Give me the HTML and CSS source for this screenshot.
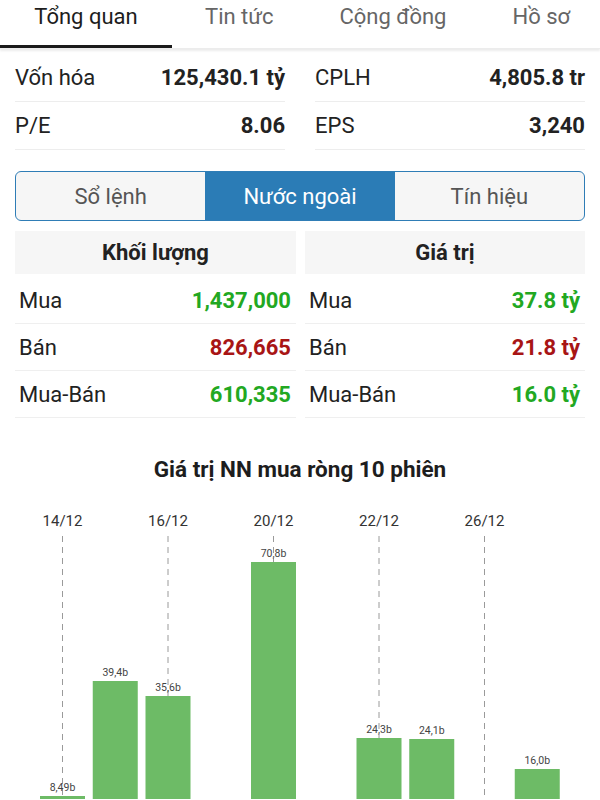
FILE: index.html
```html
<!DOCTYPE html>
<html lang="vi">
<head>
<meta charset="utf-8">
<link rel="stylesheet" href="styles.css">
</head>
<body>
<nav class="tabs">
  <div class="tab active">Tổng quan</div>
  <div class="tab">Tin tức</div>
  <div class="tab">Cộng đồng</div>
  <div class="tab">Hồ sơ</div>
</nav>
<main class="content">
  <section class="stats">
    <div class="stat"><span class="label">Vốn hóa</span><span class="value">125,430.1 tỷ</span></div>
    <div class="stat"><span class="label">CPLH</span><span class="value">4,805.8 tr</span></div>
    <div class="stat"><span class="label">P/E</span><span class="value">8.06</span></div>
    <div class="stat"><span class="label">EPS</span><span class="value">3,240</span></div>
  </section>
  <div class="segment">
    <div class="seg">Sổ lệnh</div>
    <div class="seg on">Nước ngoài</div>
    <div class="seg">Tín hiệu</div>
  </div>
  <section class="tables">
    <div class="table">
      <div class="thead">Khối lượng</div>
      <div class="trow"><span>Mua</span><span class="up">1,437,000</span></div>
      <div class="trow"><span>Bán</span><span class="down">826,665</span></div>
      <div class="trow"><span>Mua-Bán</span><span class="up">610,335</span></div>
    </div>
    <div class="table">
      <div class="thead">Giá trị</div>
      <div class="trow"><span>Mua</span><span class="up">37.8 tỷ</span></div>
      <div class="trow"><span>Bán</span><span class="down">21.8 tỷ</span></div>
      <div class="trow"><span>Mua-Bán</span><span class="up">16.0 tỷ</span></div>
    </div>
  </section>
</main>
<h2 class="chart-title">Giá trị NN mua ròng 10 phiên</h2>
<svg class="chart" width="600" height="310" viewBox="0 0 600 310">
  <g class="dates">
    <text x="62.5" y="37">14/12</text>
    <text x="168" y="37">16/12</text>
    <text x="273.5" y="37">20/12</text>
    <text x="379" y="37">22/12</text>
    <text x="484.5" y="37">26/12</text>
  </g>
  <g class="grid">
    <line x1="62.5" y1="47" x2="62.5" y2="310"/>
    <line x1="168" y1="47" x2="168" y2="310"/>
    <line x1="273.5" y1="47" x2="273.5" y2="310"/>
    <line x1="379" y1="47" x2="379" y2="310"/>
    <line x1="484.5" y1="47" x2="484.5" y2="310"/>
  </g>
  <g class="bars">
    <rect x="40" y="307" width="45" height="10"/>
    <rect x="92.75" y="192" width="45" height="130"/>
    <rect x="145.5" y="207" width="45" height="110"/>
    <rect x="251" y="73" width="45" height="240"/>
    <rect x="356.5" y="249" width="45" height="70"/>
    <rect x="409.25" y="250" width="45" height="70"/>
    <rect x="514.75" y="280" width="45" height="40"/>
  </g>
  <g class="vals">
    <text x="62.5" y="302">8,49b</text>
    <text x="115.25" y="187">39,4b</text>
    <text x="168" y="202">35,6b</text>
    <text x="273.5" y="68">70,8b</text>
    <text x="379" y="244">24,3b</text>
    <text x="431.75" y="245">24,1b</text>
    <text x="537.25" y="275">16,0b</text>
  </g>
</svg>
</body>
</html>
```
FILE: styles.css
```css
* { box-sizing: border-box; }
html, body { margin: 0; padding: 0; background: #fff; }
body {
  font-family: Roboto, "Noto Sans", sans-serif;
  color: #222;
  width: 600px;
  height: 800px;
  overflow: hidden;
}
.tabs {
  display: flex;
  height: 49px;
  box-shadow: 0 2px 2px rgba(0,0,0,0.08);
  border-bottom: 1px solid #ececec;
  white-space: nowrap;
}
.tab {
  padding: 3px 33px 0;
  font-size: 22px;
  line-height: 28px;
  color: #666;
  flex: none;
}
.tab.active {
  color: #1d1d1d;
  border-bottom: 3px solid #1a1a1a;
  width: 172px;
  text-align: center;
  padding: 3px 0 0;
}
.content { padding: 5px 15px 0; }
.stats {
  display: grid;
  grid-template-columns: 1fr 1fr;
  column-gap: 30px;
}
.stat {
  display: flex;
  justify-content: space-between;
  align-items: center;
  height: 48px;
  border-bottom: 1px solid #ededed;
  font-size: 22px;
}
.stat .label { color: #222; }
.stat .value { font-weight: 700; color: #222; }
.segment {
  display: flex;
  margin-top: 21px;
  height: 50px;
  border: 1.5px solid #2f7db6;
  border-radius: 6px;
  overflow: hidden;
  background: #f6f6f6;
}
.seg {
  flex: 1;
  display: flex;
  align-items: center;
  justify-content: center;
  font-size: 22px;
  color: #555;
}
.seg.on { background: #2b7cb6; color: #fff; }
.tables {
  display: grid;
  grid-template-columns: 281px 280px;
  column-gap: 9px;
  margin-top: 10px;
}
.thead {
  height: 43px;
  background: #f6f6f6;
  display: flex;
  align-items: center;
  justify-content: center;
  font-weight: 700;
  font-size: 22px;
  color: #222;
}
.trow {
  display: flex;
  justify-content: space-between;
  align-items: center;
  height: 47px;
  padding: 0 5px 0 4px;
  border-bottom: 1px solid #efefef;
  font-size: 22px;
}
.thead + .trow { margin-top: 3px; }
.trow .up, .trow .down { font-weight: 700; }
.up { color: #22a822; }
.down { color: #a81515; }
.chart-title {
  margin: 37px 0 0;
  text-align: center;
  font-size: 22.5px;
  font-weight: 700;
  line-height: 28px;
  color: #1d1d1d;
}
.chart { display: block; margin-top: 6px; }
.dates text {
  font-family: Roboto, sans-serif;
  font-size: 15px;
  fill: #333;
  text-anchor: middle;
}
.grid line {
  stroke: #9a9a9a;
  stroke-width: 1;
  stroke-dasharray: 6 5;
}
.bars rect { fill: #6dbb66; }
.vals text {
  font-family: Roboto, sans-serif;
  font-size: 10.5px;
  fill: #444;
  text-anchor: middle;
}
```
